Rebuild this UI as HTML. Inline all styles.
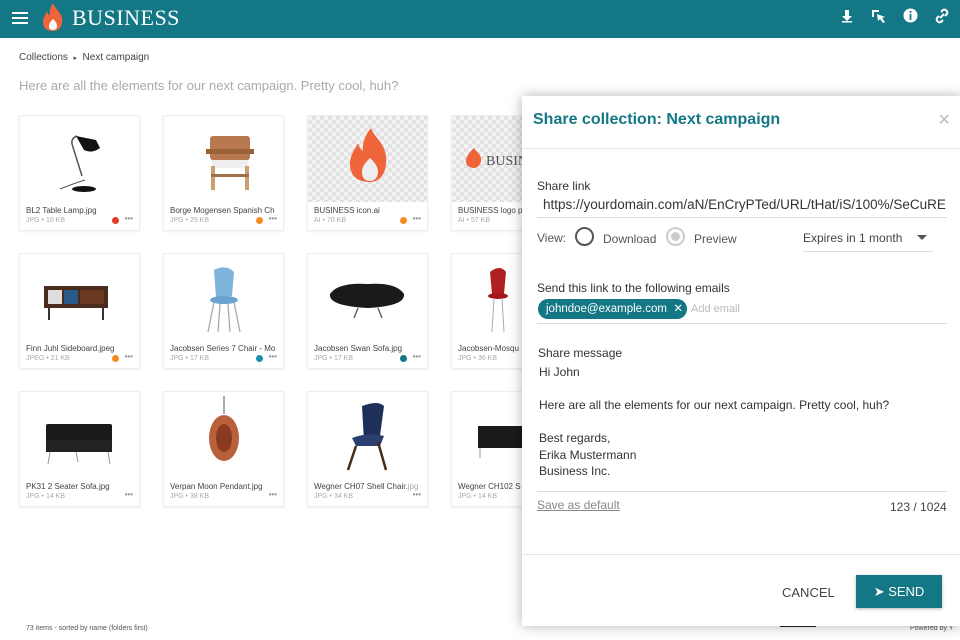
<!DOCTYPE html>
<html><head><meta charset="utf-8"><style>
*{box-sizing:border-box;margin:0;padding:0}
body{width:960px;height:640px;overflow:hidden;background:#fff;font-family:"Liberation Sans",sans-serif;position:relative;color:#333}
.hdr{position:absolute;left:0;top:0;width:960px;height:38px;background:#137785}
.brand{position:absolute;left:72px;top:5px;font-family:"Liberation Serif",serif;color:#fff;font-size:22px;letter-spacing:.5px}
.crumb{position:absolute;left:19px;top:52px;font-size:10px;color:#444}
.intro{position:absolute;left:19px;top:78px;font-size:13px;color:#aaa}
.card{position:absolute;width:121px;height:116px;border:1px solid #eee;background:#fff;box-shadow:0 1px 2px rgba(0,0,0,.06)}
.card .img{position:absolute;left:0;top:0;width:119px;height:86px;overflow:hidden}
.card .n{position:absolute;left:6px;top:90px;font-size:8px;color:#444;white-space:nowrap;width:108px;overflow:hidden}
.card .m{position:absolute;left:6px;top:101px;font-size:7px;color:#aaa}
.card .d{position:absolute;right:20px;top:101px;width:7px;height:7px;border-radius:50%}
.card .e{position:absolute;right:6px;top:98px;font-size:8px;color:#888}
.chk{background-color:#f3f3f3;background-image:linear-gradient(45deg,#e2e2e2 25%,transparent 25%,transparent 75%,#e2e2e2 75%),linear-gradient(45deg,#e2e2e2 25%,transparent 25%,transparent 75%,#e2e2e2 75%);background-size:8px 8px;background-position:0 0,4px 4px}
.dlg{position:absolute;left:522px;top:96px;width:440px;height:530px;background:#fff;box-shadow:0 0 12px rgba(0,0,0,.3)}
.dlg .t{position:absolute;left:11px;top:15px;font-size:16px;color:#137785;font-weight:bold}
.lbl{position:absolute;font-size:12px;color:#333}
.line{position:absolute;height:1px;background:#ddd}
.foot{position:absolute;font-size:7px;color:#555}
</style></head><body>
<div class="hdr">
<svg style="position:absolute;left:12px;top:12px" width="16" height="13"><rect y="0" width="16" height="2" fill="#fff"/><rect y="5" width="16" height="2" fill="#fff"/><rect y="10" width="16" height="2" fill="#fff"/></svg>
<svg style="position:absolute;left:40px;top:2px" width="26" height="30" viewBox="0 0 26 30"><path d="M13 1C15 8 24 11 22 21C21 27 17 29 13 29C8 29 3 27 3 20C3 15 6 12 7 9C8 13 10 13 10 13C9 8 11 4 13 1Z" fill="#f0643a"/><path d="M13 17C15 19 17 21 17 24C17 27 15 28 13 28C10 28 9 27 9 24C9 21 11 19 13 17Z" fill="#fff"/></svg>
<div class="brand">BUSINESS</div>
<svg style="position:absolute;left:840px;top:9px" width="14" height="14"><path d="M5 1h4v6h3l-5 5-5-5h3z" fill="#fff"/><rect x="2" y="12" width="10" height="1.5" fill="#fff"/></svg>
<svg style="position:absolute;left:871px;top:9px" width="16" height="16"><path d="M1 1h7v2H3v5H1z" fill="#fff"/><path d="M6 5l8 3-3 1 3 4-2 1-3-4-2 2z" fill="#fff"/></svg>
<svg style="position:absolute;left:903px;top:8px" width="15" height="15"><circle cx="7.5" cy="7.5" r="7" fill="#fff"/><rect x="6.6" y="6" width="1.8" height="6" fill="#137785"/><rect x="6.6" y="3" width="1.8" height="1.8" fill="#137785"/></svg>
<svg style="position:absolute;left:934px;top:8px" width="16" height="16"><g fill="none" stroke="#fff" stroke-width="2"><path d="M7 4l2-2a3 3 0 0 1 4 4l-2 2"/><path d="M9 12l-2 2a3 3 0 0 1-4-4l2-2"/><path d="M6 10l4-4"/></g></svg>
</div>
<div class="crumb">Collections &nbsp;<span style="font-size:7px">▸</span>&nbsp; Next campaign</div>
<div class="intro">Here are all the elements for our next campaign. Pretty cool, huh?</div>

<!-- row 1 -->
<div class="card" style="left:19px;top:115px"><div class="img"><svg width="119" height="86"><path d="M40 73Q55 67 65 64" stroke="#555" fill="none"/><path d="M62 60L52 28Q51 22 57 20" stroke="#555" stroke-width="1.5" fill="none"/><path d="M56 20L76 24L80 32Q72 38 64 34Z" fill="#111"/><ellipse cx="64" cy="73" rx="12" ry="3" fill="#111"/></svg></div><div class="n">BL2 Table Lamp.jpg</div><div class="m">JPG • 10 KB</div><div class="d" style="background:#e53a2a"></div><div class="e">•••</div></div>
<div class="card" style="left:163px;top:115px"><div class="img"><svg width="119" height="86"><rect x="46" y="20" width="40" height="24" rx="3" fill="#b87850"/><rect x="42" y="33" width="48" height="5" fill="#9a6038"/><rect x="48" y="44" width="36" height="8" fill="#eee"/><rect x="47" y="50" width="4" height="24" fill="#c9a070"/><rect x="81" y="50" width="4" height="24" fill="#c9a070"/><rect x="47" y="58" width="38" height="3" fill="#a07048"/></svg></div><div class="n">Borge Mogensen Spanish Ch</div><div class="m">JPG • 25 KB</div><div class="d" style="background:#f58a1f"></div><div class="e">•••</div></div>
<div class="card" style="left:307px;top:115px"><div class="img chk"><svg width="119" height="86" viewBox="0 0 119 86"><path d="M63 12C66 22 80 28 78 48C77 60 70 66 62 66C52 66 42 62 42 48C42 38 48 32 50 27C52 34 55 35 55 35C54 26 58 18 63 12Z" fill="#f0643a"/><path d="M62 42C66 46 70 50 70 56C70 62 66 65 62 65C57 65 54 62 54 56C54 50 58 46 62 42Z" fill="#eee"/></svg></div><div class="n">BUSINESS icon.ai</div><div class="m">AI • 70 KB</div><div class="d" style="background:#f58a1f"></div><div class="e">•••</div></div>
<div class="card" style="left:451px;top:115px"><div class="img chk"><svg width="119" height="86"><path d="M22 32C24 36 30 38 29 45C28 50 25 52 22 52C18 52 14 50 14 45C14 41 17 38 18 36Z" fill="#f0643a"/><text x="34" y="49" font-family="Liberation Serif" font-size="14" fill="#555">BUSIN</text></svg></div><div class="n">BUSINESS logo p</div><div class="m">AI • 57 KB</div></div>
<!-- row 2 -->
<div class="card" style="left:19px;top:253px"><div class="img"><svg width="119" height="86"><rect x="24" y="32" width="64" height="22" fill="#4a2a1a"/><rect x="28" y="36" width="14" height="14" fill="#ddd"/><rect x="44" y="36" width="14" height="14" fill="#2a5a8a"/><rect x="60" y="36" width="24" height="14" fill="#6a3a20"/><rect x="28" y="54" width="2" height="12" fill="#333"/><rect x="82" y="54" width="2" height="12" fill="#333"/></svg></div><div class="n">Finn Juhl Sideboard.jpeg</div><div class="m">JPEG • 21 KB</div><div class="d" style="background:#f58a1f"></div><div class="e">•••</div></div>
<div class="card" style="left:163px;top:253px"><div class="img"><svg width="119" height="86"><path d="M50 16Q62 10 70 18L68 42L52 44Z" fill="#7fb4dc"/><ellipse cx="60" cy="46" rx="14" ry="4" fill="#6aa3cf"/><path d="M50 48L44 78M70 48L76 78M56 50L54 78M64 50L66 78" stroke="#aaa" stroke-width="1.3"/></svg></div><div class="n">Jacobsen Series 7 Chair - Mo</div><div class="m">JPG • 17 KB</div><div class="d" style="background:#1a8fb0"></div><div class="e">•••</div></div>
<div class="card" style="left:307px;top:253px"><div class="img"><svg width="119" height="86"><path d="M22 40Q30 28 60 30Q88 28 96 40Q98 52 60 54Q20 52 22 40Z" fill="#1a1a1a"/><path d="M50 54L46 64M70 54L74 64" stroke="#666" stroke-width="1.5"/></svg></div><div class="n">Jacobsen Swan Sofa.jpg</div><div class="m">JPG • 17 KB</div><div class="d" style="background:#137785"></div><div class="e">•••</div></div>
<div class="card" style="left:451px;top:253px"><div class="img"><svg width="119" height="86"><path d="M38 18Q48 10 54 18L52 40L40 40Z" fill="#b02020"/><ellipse cx="46" cy="42" rx="10" ry="3" fill="#a01818"/><path d="M42 44L40 78M50 44L52 78" stroke="#aaa"/></svg></div><div class="n">Jacobsen-Mosqu</div><div class="m">JPG • 36 KB</div></div>
<!-- row 3 -->
<div class="card" style="left:19px;top:391px"><div class="img"><svg width="119" height="86"><rect x="26" y="32" width="66" height="20" rx="2" fill="#1a1a1a"/><rect x="26" y="48" width="66" height="12" fill="#222"/><path d="M30 60L28 72M88 60L90 72M56 60L58 70" stroke="#999"/></svg></div><div class="n">PK31 2 Seater Sofa.jpg</div><div class="m">JPG • 14 KB</div><div class="e">•••</div></div>
<div class="card" style="left:163px;top:391px"><div class="img"><svg width="119" height="86"><path d="M60 4V22" stroke="#555"/><ellipse cx="60" cy="46" rx="15" ry="23" fill="#b8603a"/><ellipse cx="60" cy="46" rx="8" ry="14" fill="#8a3a20"/></svg></div><div class="n">Verpan Moon Pendant.jpg</div><div class="m">JPG • 38 KB</div><div class="e">•••</div></div>
<div class="card" style="left:307px;top:391px"><div class="img"><svg width="119" height="86"><path d="M54 14Q70 8 76 14L72 44L56 50Z" fill="#1e2f5a"/><path d="M44 46Q60 40 76 44L72 54L48 54Z" fill="#2a3f70"/><path d="M48 54L40 78M70 50L78 78" stroke="#4a2a1a" stroke-width="2.5"/></svg></div><div class="n">Wegner CH07 Shell Chair.<span style="color:#aaa">jpg</span></div><div class="m">JPG • 34 KB</div><div class="e">•••</div></div>
<div class="card" style="left:451px;top:391px"><div class="img"><svg width="119" height="86"><rect x="26" y="34" width="50" height="22" fill="#1a1a1a"/><path d="M28 56L28 66M74 56L76 66" stroke="#999"/></svg></div><div class="n">Wegner CH102 S</div><div class="m">JPG • 14 KB</div></div>

<div class="foot" style="left:26px;top:625px">73 items - sorted by name (folders first)</div>
<div class="foot" style="left:910px;top:625px">Powered by Y</div>
<div style="position:absolute;left:780px;top:625px;width:36px;height:2px;background:#222"></div>

<div class="dlg">
<div class="t">Share collection: Next campaign</div>
<div style="position:absolute;right:12px;top:14px;font-size:20px;color:#bbb;line-height:20px">×</div>
<div class="line" style="left:0;top:52px;width:440px;background:#e5e5e5"></div>
<div class="lbl" style="left:15px;top:83px">Share link</div>
<div class="lbl" style="left:21px;top:101px;font-size:13.5px;color:#333">https://yourdomain.com/aN/EnCryPTed/URL/tHat/iS/100%/SeCuRE</div>
<div class="line" style="left:15px;top:121px;width:410px"></div>
<div class="lbl" style="left:15px;top:135px;color:#555">View:</div>
<div style="position:absolute;left:53px;top:131px;width:19px;height:19px;border:2px solid #555;border-radius:50%"></div>
<div class="lbl" style="left:81px;top:136px;color:#555">Download</div>
<div style="position:absolute;left:144px;top:131px;width:19px;height:19px;border:2px solid #ccc;border-radius:50%"><div style="margin:3px;width:9px;height:9px;border-radius:50%;background:#ccc"></div></div>
<div class="lbl" style="left:172px;top:136px;color:#555">Preview</div>
<div class="lbl" style="left:281px;top:135px;color:#444">Expires in 1 month</div>
<div style="position:absolute;left:395px;top:139px;border-left:5px solid transparent;border-right:5px solid transparent;border-top:5px solid #555"></div>
<div class="line" style="left:281px;top:155px;width:130px"></div>
<div class="lbl" style="left:15px;top:185px">Send this link to the following emails</div>
<div style="position:absolute;left:16px;top:203px;width:149px;height:20px;border-radius:10px;background:#137785;color:#fff;font-size:11.5px;line-height:20px;padding-left:8px">johndoe@example.com &nbsp;✕</div>
<div class="lbl" style="left:169px;top:207px;font-size:11px;color:#bbb">Add email</div>
<div class="line" style="left:15px;top:227px;width:410px"></div>
<div class="lbl" style="left:16px;top:250px">Share message</div>
<div class="lbl" style="left:17px;top:268px;line-height:16.5px">Hi John<br><br>Here are all the elements for our next campaign. Pretty cool, huh?<br><br>Best regards,<br>Erika Mustermann<br>Business Inc.</div>
<div class="line" style="left:15px;top:395px;width:410px"></div>
<div class="lbl" style="left:15px;top:402px;color:#888;text-decoration:underline">Save as default</div>
<div class="lbl" style="left:368px;top:404px;color:#444">123 / 1024</div>
<div class="line" style="left:0;top:458px;width:440px;background:#e5e5e5"></div>
<div class="lbl" style="left:260px;top:489px;font-size:13px;color:#444">CANCEL</div>
<div style="position:absolute;left:334px;top:479px;width:86px;height:33px;background:#137785;color:#fff;font-size:13px;line-height:33px;text-align:center;box-shadow:0 1px 3px rgba(0,0,0,.3)">➤ SEND</div>
</div>
</body></html>
